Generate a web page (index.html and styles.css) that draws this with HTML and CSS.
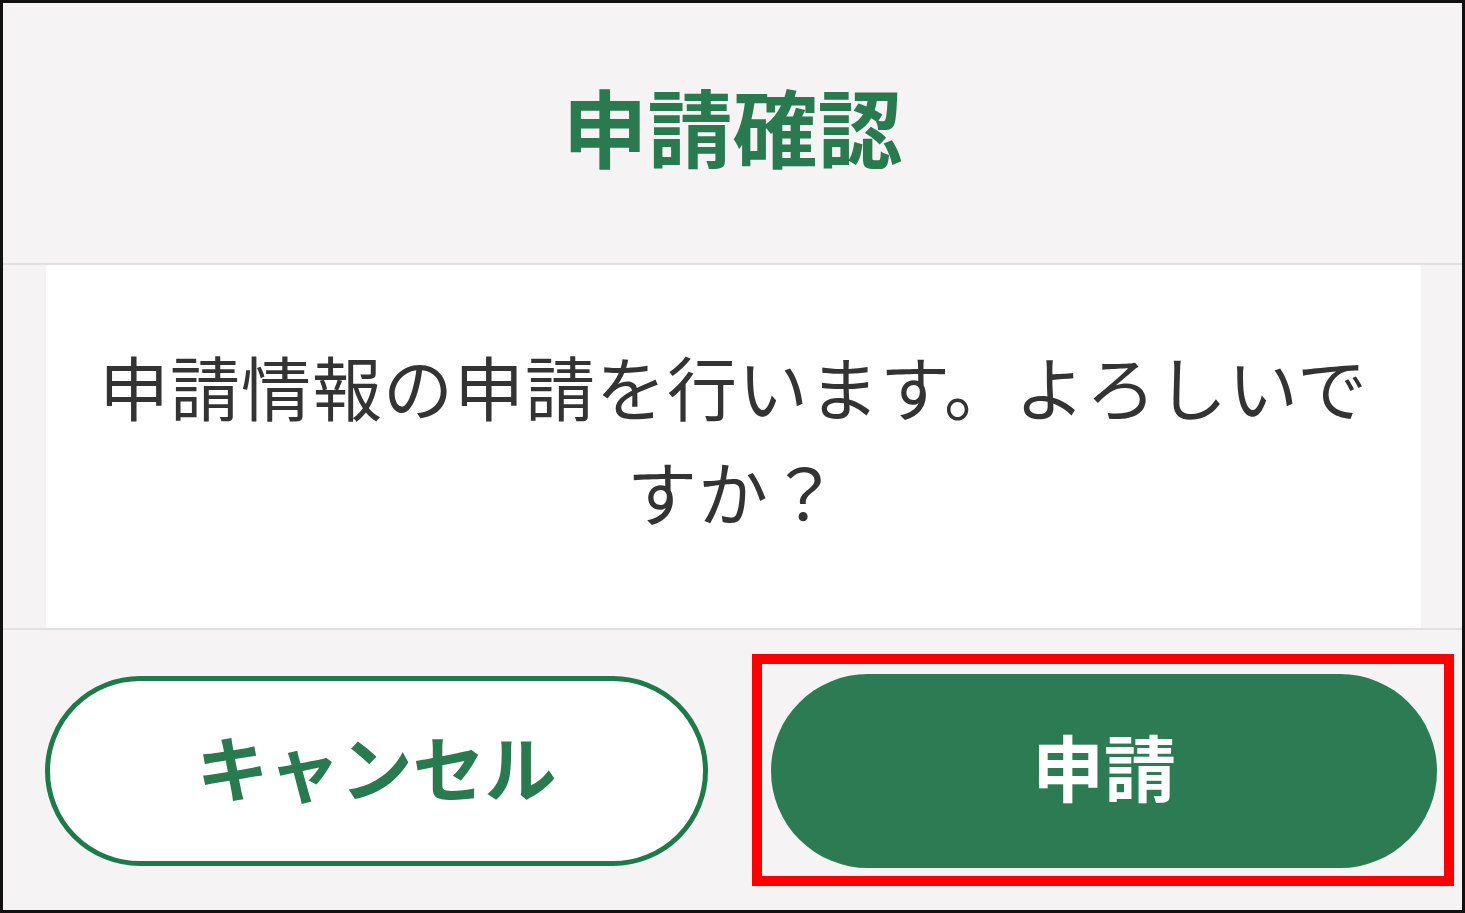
FILE: index.html
```html
<!DOCTYPE html>
<html lang="ja">
<head>
<meta charset="utf-8">
<title>申請確認</title>
<link rel="stylesheet" href="styles.css">
</head>
<body>
<div class="dialog">
  <header class="dialog-header">
    <h1 class="dialog-title">申請確認</h1>
  </header>
  <section class="dialog-body">
    <div class="dialog-panel">
      <p class="dialog-message">申請情報の申請を行います。よろしいですか？</p>
    </div>
  </section>
  <footer class="dialog-footer">
    <button class="btn btn-cancel" type="button">キャンセル</button>
    <div class="highlight">
      <button class="btn btn-submit" type="button">申請</button>
    </div>
  </footer>
</div>
</body>
</html>
```

FILE: styles.css
```css
html, body {
  margin: 0;
  padding: 0;
  background: #f5f3f4;
}

.dialog {
  box-sizing: border-box;
  width: 1465px;
  height: 913px;
  border: 3px solid #111;
  background: #f5f3f4;
  display: flex;
  flex-direction: column;
  font-family: "Noto Sans CJK JP", "Noto Sans", sans-serif;
}

.dialog-header {
  box-sizing: border-box;
  height: 262px;
  display: flex;
  align-items: center;
  justify-content: center;
  padding-bottom: 18px;
  border-bottom: 2px solid #e2e0e1;
}

.dialog-title {
  margin: 0;
  font-size: 85px;
  font-weight: 700;
  line-height: 1;
  color: #2a7a50;
}

.dialog-body {
  height: 363px;
  display: flex;
  padding: 0 41px 0 43px;
  border-bottom: 2px solid #e2e0e1;
}

.dialog-panel {
  flex: 1;
  background: #ffffff;
  display: flex;
  align-items: center;
  justify-content: center;
  padding: 0 30px;
}

.dialog-message {
  margin: 0;
  padding-bottom: 18px;
  font-size: 70px;
  line-height: 105px;
  font-weight: 400;
  letter-spacing: 1px;
  color: #333333;
  text-align: center;
}

.dialog-footer {
  flex: 1;
  display: flex;
  align-items: flex-start;
  padding: 24px 0 0 42px;
  gap: 44px;
}

.btn {
  font-family: "Noto Sans CJK JP", "Noto Sans", sans-serif;
  font-size: 72px;
  font-weight: 700;
  line-height: 1;
  border-radius: 100px;
  cursor: pointer;
  display: flex;
  align-items: center;
  justify-content: center;
  padding: 0 0 12px 0;
}

.btn-cancel {
  box-sizing: border-box;
  width: 663px;
  height: 190px;
  margin-top: 22px;
  background: #ffffff;
  border: 5px solid #1f7a4a;
  color: #2a7a50;
}

.highlight {
  border: 10px solid #ff0000;
  padding: 10px 7px 8px 9px;
}

.btn-submit {
  box-sizing: border-box;
  width: 666px;
  height: 194px;
  background: #2c7b53;
  border: none;
  color: #ffffff;
}
```
